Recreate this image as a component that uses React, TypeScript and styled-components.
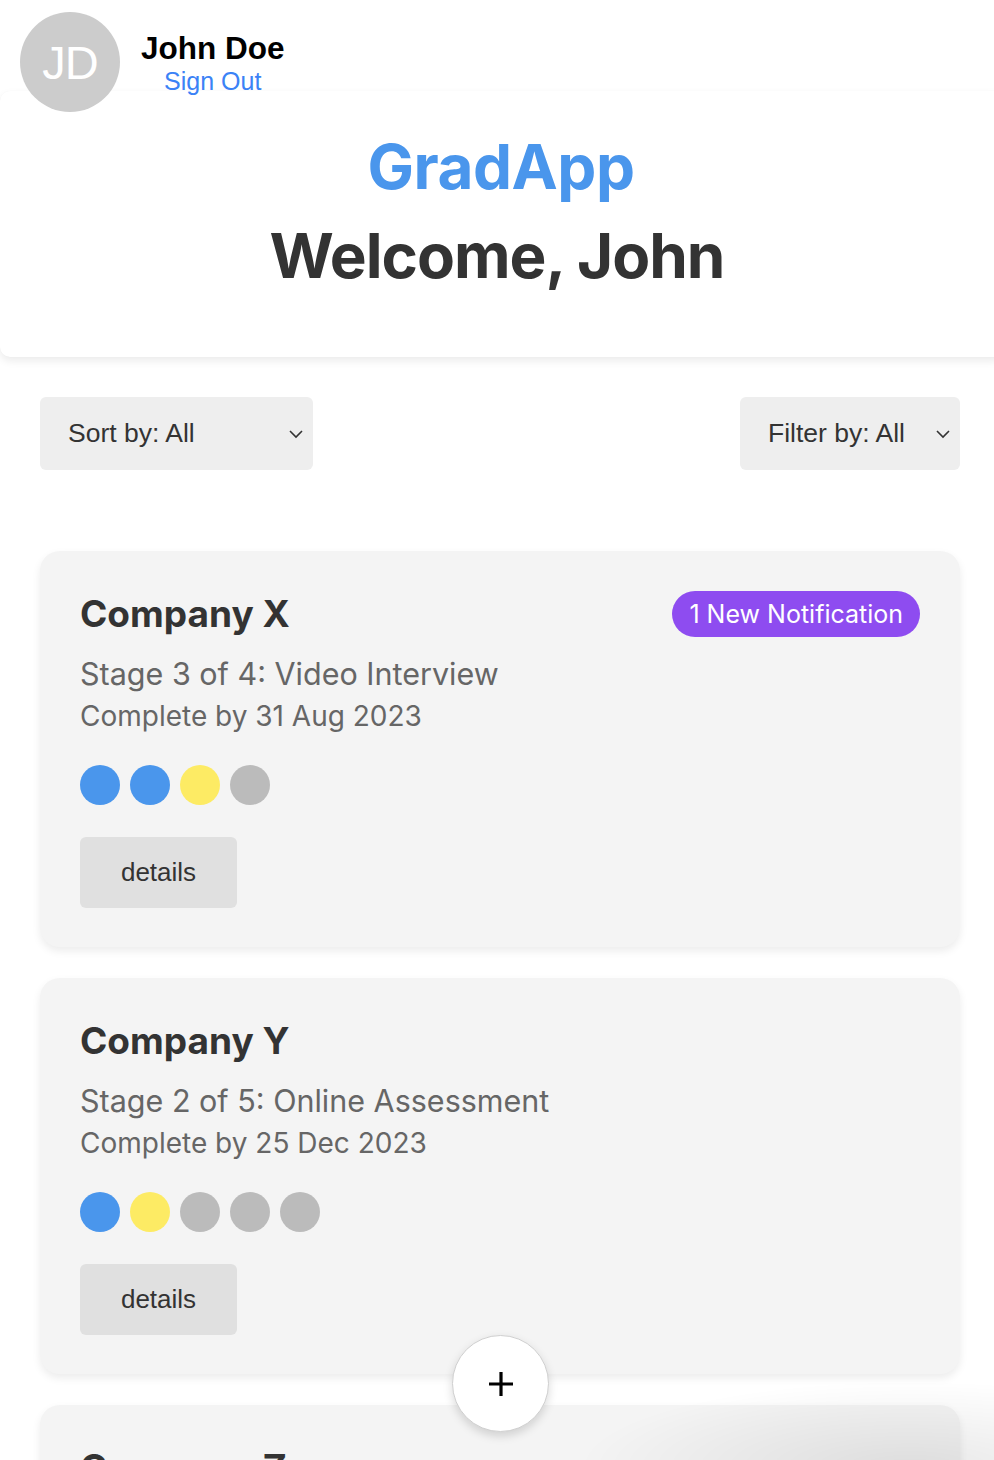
import React from "react";
import styled, { createGlobalStyle } from "styled-components";

const Global = createGlobalStyle`
  html, body { margin: 0; padding: 0; background: #fff; }
  body { font-family: Inter, "Liberation Sans", sans-serif; color: #333; overflow: hidden; }
  * { box-sizing: border-box; }
`;

const Page = styled.div`
  position: relative;
  width: 994px;
  min-height: 1460px;
  padding-top: 91px;
`;

const UserBar = styled.div`
  position: absolute;
  top: 12px;
  left: 20px;
  display: flex;
  align-items: flex-start;
  gap: 21px;
  z-index: 2;
`;

const Avatar = styled.div`
  width: 100px;
  height: 100px;
  border-radius: 50%;
  background: #cccccc;
  color: #fff;
  font-family: "Liberation Sans", Arial, sans-serif;
  font-size: 47px;
  display: flex;
  align-items: center;
  justify-content: center;
  letter-spacing: -1px;
`;

const UserInfo = styled.div`
  display: flex;
  flex-direction: column;
  align-items: center;
  padding-top: 17px;
`;

const UserName = styled.div`
  font-family: "Liberation Sans", Arial, sans-serif;
  font-weight: 700;
  font-size: 31.5px;
  line-height: 38px;
  color: #000;
`;

const SignOut = styled.a`
  font-family: "Liberation Sans", Arial, sans-serif;
  font-size: 25px;
  line-height: 28px;
  color: #3b82f6;
  text-decoration: none;
`;

const Header = styled.header`
  background: #fff;
  border-radius: 10px;
  box-shadow: 0 4px 8px rgba(0, 0, 0, 0.08), 0 0 1px rgba(0, 0, 0, 0.04);
  height: 266px;
  display: flex;
  flex-direction: column;
  align-items: center;
  padding-top: 38px;
  margin-right: -10px;
  padding-right: 10px;
`;

const Brand = styled.h1`
  margin: 0;
  font-size: 62px;
  font-weight: 700;
  line-height: 76px;
  color: #4a96ec;
  letter-spacing: -0.5px;
  padding-left: 8px;
`;

const Welcome = styled.h2`
  margin: 10px 0 0;
  font-size: 62px;
  font-weight: 700;
  line-height: 82px;
  color: #333;
  letter-spacing: -1px;
`;

const Controls = styled.div`
  display: flex;
  justify-content: space-between;
  padding: 40px 34px 0 40px;
`;

const Select = styled.div<{ $w: number }>`
  width: ${(p) => p.$w}px;
  height: 73px;
  background: #eeeeee;
  border-radius: 6px;
  display: flex;
  align-items: center;
  justify-content: space-between;
  padding: 0 8px 0 28px;
  font-family: "Liberation Sans", Arial, sans-serif;
  font-size: 26.5px;
  color: #333;
`;

const List = styled.div`
  display: flex;
  flex-direction: column;
  gap: 31px;
  padding: 81px 34px 0 40px;
`;

const Card = styled.div`
  background: #f4f4f4;
  border-radius: 20px;
  box-shadow: 0 4px 8px rgba(0, 0, 0, 0.08);
  padding: 40px 40px 39px 40px;
  display: flex;
  flex-direction: column;
  align-items: flex-start;
`;

const TopRow = styled.div`
  display: flex;
  justify-content: space-between;
  align-items: flex-start;
  width: 100%;
`;

const Company = styled.div`
  font-size: 37px;
  font-weight: 700;
  line-height: 46px;
  color: #333;
`;

const Badge = styled.span`
  background: #8e4cf0;
  color: #fff;
  font-size: 25px;
  line-height: 46px;
  height: 46px;
  padding: 0 17px;
  border-radius: 23px;
`;

const Stage = styled.div`
  margin-top: 19px;
  font-size: 30.5px;
  line-height: 36px;
  color: #666;
`;

const Due = styled.div`
  margin-top: 8px;
  font-size: 28px;
  line-height: 33px;
  color: #666;
`;

const Dots = styled.div`
  display: flex;
  gap: 10px;
  margin-top: 32px;
`;

const Dot = styled.span<{ $c: string }>`
  width: 40px;
  height: 40px;
  border-radius: 50%;
  background: ${(p) => p.$c};
`;

const DetailsButton = styled.button`
  margin-top: 32px;
  width: 157px;
  height: 71px;
  border: none;
  border-radius: 6px;
  background: #e0e0e0;
  font-family: "Liberation Sans", Arial, sans-serif;
  font-size: 26px;
  color: #333;
`;

const Fab = styled.button`
  position: fixed;
  left: 452px;
  top: 1335px;
  width: 97px;
  height: 97px;
  border-radius: 50%;
  border: 1px solid #cfcfcf;
  background: #fff;
  box-shadow: 0 4px 10px rgba(0, 0, 0, 0.15);
  display: flex;
  align-items: center;
  justify-content: center;
  z-index: 3;
`;

const Shade = styled.div`
  position: fixed;
  right: 0;
  bottom: 0;
  width: 420px;
  height: 80px;
  background: radial-gradient(ellipse at 80% 110%, rgba(0, 0, 0, 0.09), rgba(0, 0, 0, 0) 70%);
  pointer-events: none;
  z-index: 2;
`;

const Chevron = () => (
  <svg width="18" height="18" viewBox="0 0 18 18" fill="none" stroke="#333" strokeWidth="1.6">
    <path d="M3 6l6 6 6-6" />
  </svg>
);

const colors = { done: "#4a96ec", cur: "#fdeb64", todo: "#bbbbbb" };

type App = {
  name: string;
  stage: string;
  due: string;
  dots: string[];
  notif?: string;
};

const apps: App[] = [
  {
    name: "Company X",
    stage: "Stage 3 of 4: Video Interview",
    due: "Complete by 31 Aug 2023",
    dots: [colors.done, colors.done, colors.cur, colors.todo],
    notif: "1 New Notification",
  },
  {
    name: "Company Y",
    stage: "Stage 2 of 5: Online Assessment",
    due: "Complete by 25 Dec 2023",
    dots: [colors.done, colors.cur, colors.todo, colors.todo, colors.todo],
  },
  {
    name: "Company Z",
    stage: "Stage 1 of 3: Application",
    due: "Complete by 10 Jan 2024",
    dots: [colors.cur, colors.todo, colors.todo],
  },
];

export default function AppRoot() {
  return (
    <Page>
      <Global />
      <UserBar>
        <Avatar>JD</Avatar>
        <UserInfo>
          <UserName>John Doe</UserName>
          <SignOut href="#">Sign Out</SignOut>
        </UserInfo>
      </UserBar>
      <Header>
        <Brand>GradApp</Brand>
        <Welcome>Welcome, John</Welcome>
      </Header>
      <Controls>
        <Select $w={273}>
          <span>Sort by: All</span>
          <Chevron />
        </Select>
        <Select $w={220}>
          <span>Filter by: All</span>
          <Chevron />
        </Select>
      </Controls>
      <List>
        {apps.map((a) => (
          <Card key={a.name}>
            <TopRow>
              <Company>{a.name}</Company>
              {a.notif && <Badge>{a.notif}</Badge>}
            </TopRow>
            <Stage>{a.stage}</Stage>
            <Due>{a.due}</Due>
            <Dots>
              {a.dots.map((c, i) => (
                <Dot key={i} $c={c} />
              ))}
            </Dots>
            <DetailsButton>details</DetailsButton>
          </Card>
        ))}
      </List>
      <Fab>
        <svg width="26" height="26" viewBox="0 0 26 26" stroke="#000" strokeWidth="3.2">
          <path d="M13 1v24M1 13h24" />
        </svg>
      </Fab>
      <Shade />
    </Page>
  );
}
